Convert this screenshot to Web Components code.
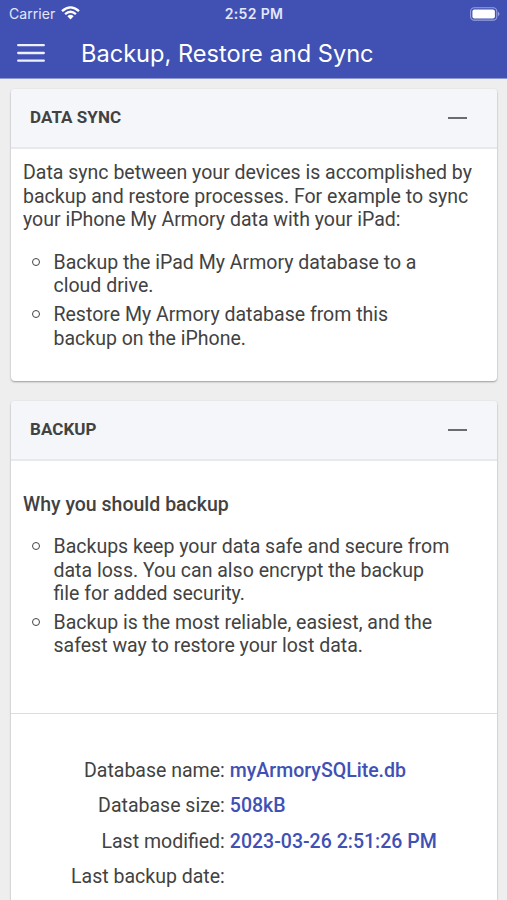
<!DOCTYPE html>
<html lang="en"><head><meta charset="utf-8"><title>Backup, Restore and Sync</title>
<style>
html,body{margin:0;height:900px;overflow:hidden}
body{background:#eee;color:#424242;font:19.53px/23.3px Roboto,sans-serif}
</style></head><body>
<backup-app></backup-app>
<script>
const define=(name,html)=>customElements.define(name,class extends HTMLElement{
  constructor(){super();this.attachShadow({mode:'open'}).innerHTML=html}
});
define('status-bar',`<style>
:host{display:grid;grid-template-columns:1fr auto 1fr;align-items:center;height:27px;padding:0 7px 0 9px;font:14px/18px Inter,sans-serif;color:#e4e7fb}
.left{display:flex;align-items:center;gap:6px;font-size:14px;letter-spacing:.05px}
.time{font-weight:600;font-size:14px;letter-spacing:.35px;margin-left:-1px}
.battery{justify-self:end;display:block}.wifi{display:block;margin-top:-2px}</style>
<div class="left"><span>Carrier</span><svg class="wifi" width="19" height="14" viewBox="0 0 19 14" fill="none" stroke="#fff" stroke-width="2.3"><path d="M1 5.2Q9.5 -2.5 18 5.2M4.1 8.1Q9.5 3.3 14.9 8.1"/><path d="M6.4 10.2Q9.5 7.5 12.6 10.2L9.5 13.6Z" fill="#fff" stroke="none"/></svg></div>
<span class="time">2:52 PM</span>
<svg class="battery" width="30" height="14" viewBox="0 0 30 14"><rect x=".6" y=".7" width="26.2" height="12.4" rx="3.7" fill="none" stroke="#98a1df" stroke-width="1.1"/><rect x="2.4" y="2.4" width="22.5" height="9" rx="2" fill="#fff"/><path d="M28 4.8Q31 7 28 9.2Z" fill="#98a1df"/></svg>`);
define('app-toolbar',`<style>
:host{display:flex;align-items:center;height:52px;padding-left:17px;gap:36px;color:#fff;font:23.6px/30px Inter,sans-serif}
svg{display:block}.title{white-space:nowrap;padding-top:1px}</style>
<svg width="28" height="18" viewBox="0 0 28 18" stroke="#eef0ff" stroke-width="2.3" stroke-linecap="round"><path d="M1.2 1.2H26.8M1.2 9H26.8M1.2 16.7H26.8"/></svg><span class="title"><slot></slot></span>`);
define('expand-card',`<style>
:host{display:block;background:#fff;border-radius:4px;box-shadow:0 1px 2px rgba(0,0,0,.35),0 0 2px rgba(0,0,0,.04)}
header{display:flex;align-items:center;justify-content:space-between;box-sizing:border-box;height:60px;padding:0 30px 0 19px;background:#f4f6fa;border-bottom:2px solid #e7eaec;border-radius:4px 4px 0 0;font-size:17px;font-weight:700}
i{display:block;width:19px;height:2px;background:#6c6c6f}
.title{white-space:nowrap;letter-spacing:.05px}</style><header><span class="title"><slot name="title"></slot></span><i></i></header><slot></slot>`);
define('text-lines',`<style>:host{display:block;white-space:pre-line}</style><slot></slot>`);
define('bullet-item',`<style>
:host{display:grid;grid-template-columns:30.5px 1fr;white-space:pre-line}
i{box-sizing:border-box;width:8px;height:8px;margin:7px 0 0 8.5px;border:1.5px solid #444;border-radius:50%}
</style><i></i><div><slot></slot></div>`);
define('data-row',`<style>
:host{display:grid;grid-template-columns:213.8px 1fr;column-gap:5px;height:35.4px;white-space:nowrap}
.label{text-align:right}.value{color:#3f51b5;font-weight:500}</style><span class="label"><slot name="label"></slot></span><span class="value"><slot></slot></span>`);
define('backup-app',`<style>
:host{display:block;height:900px;overflow:hidden}
.top{height:78px;background:#4051b3;border-bottom:1px solid #8d97d2}
main{display:grid;gap:20px;padding:10px 10px 0 11px}
.sync{height:292px}.backup{height:499px;border-radius:4px 4px 0 0}
.intro{padding:12.4px 0 0 12px;white-space:pre}
.list{display:grid;gap:6px;padding:19px 0 0 12px}
.sync .list{padding-top:19.4px}
h2{margin:32px 0 0 12px;font:500 19.5px/23.3px Roboto,sans-serif}
.rows{margin-top:55px;border-top:1px solid #ddd;padding-top:45px}
</style><div class="top"><status-bar></status-bar><app-toolbar>Backup, Restore and Sync</app-toolbar></div>
<main><expand-card class="sync"><span slot="title">DATA SYNC</span><text-lines class="intro">Data sync between your devices is accomplished by
backup and restore processes. For example to sync
your iPhone My Armory data with your iPad:</text-lines>
<div class="list"><bullet-item>Backup the iPad My Armory database to a
cloud drive.</bullet-item><bullet-item>Restore My Armory database from this
backup on the iPhone.</bullet-item></div></expand-card>
<expand-card class="backup"><span slot="title">BACKUP</span><h2>Why you should backup</h2><div class="list"><bullet-item>Backups keep your data safe and secure from
data loss. You can also encrypt the backup
file for added security.</bullet-item><bullet-item>Backup is the most reliable, easiest, and the
safest way to restore your lost data.</bullet-item></div>
<div class="rows"><data-row><span slot="label">Database name:</span>myArmorySQLite.db</data-row><data-row><span slot="label">Database size:</span>508kB</data-row><data-row><span slot="label">Last modified:</span>2023-03-26 2:51:26 PM</data-row><data-row><span slot="label">Last backup date:</span></data-row></div></expand-card></main>`);
</script></body></html>
